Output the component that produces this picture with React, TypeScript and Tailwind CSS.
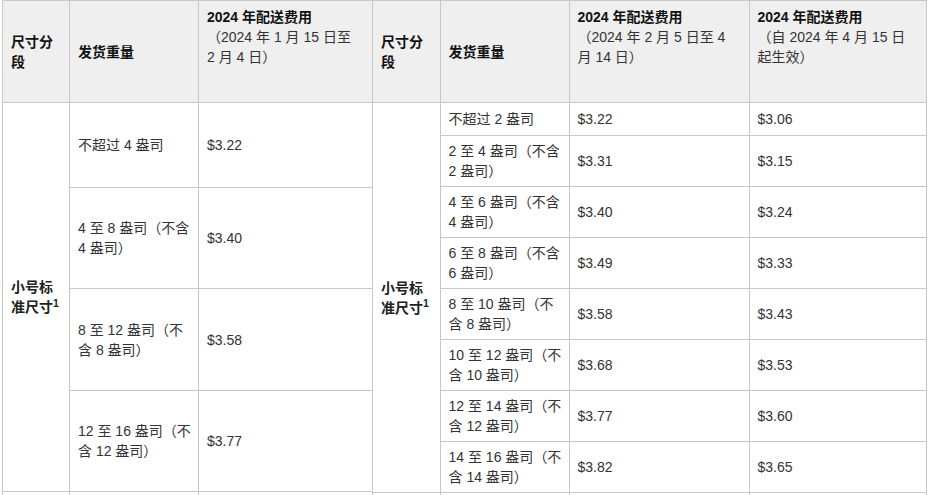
const leftRows = [
  { w: ["不超过 4 盎司"], p: "$3.22", h: "h-[85px]" },
  { w: ["4 至 8 盎司（不含", "4 盎司）"], p: "$3.40", h: "h-[101px]" },
  { w: ["8 至 12 盎司（不", "含 8 盎司）"], p: "$3.58", h: "h-[102px]" },
  { w: ["12 至 16 盎司（不", "含 12 盎司）"], p: "$3.77", h: "h-[101px]" },
];

const rightRows = [
  { w: ["不超过 2 盎司"], a: "$3.22", b: "$3.06", h: "h-[33px]" },
  { w: ["2 至 4 盎司（不含", "2 盎司）"], a: "$3.31", b: "$3.15", h: "h-[51px]" },
  { w: ["4 至 6 盎司（不含", "4 盎司）"], a: "$3.40", b: "$3.24", h: "h-[51px]" },
  { w: ["6 至 8 盎司（不含", "6 盎司）"], a: "$3.49", b: "$3.33", h: "h-[51px]" },
  { w: ["8 至 10 盎司（不", "含 8 盎司）"], a: "$3.58", b: "$3.43", h: "h-[51px]" },
  { w: ["10 至 12 盎司（不", "含 10 盎司）"], a: "$3.68", b: "$3.53", h: "h-[51px]" },
  { w: ["12 至 14 盎司（不", "含 12 盎司）"], a: "$3.77", b: "$3.60", h: "h-[51px]" },
  { w: ["14 至 16 盎司（不", "含 14 盎司）"], a: "$3.82", b: "$3.65", h: "h-[51px]" },
];

const cell = "border border-[#c8c8c8] px-2 align-middle whitespace-nowrap";
const head = "border border-[#c8c8c8] px-2 bg-[#efefef] whitespace-nowrap";

function Lines({ lines }: { lines: string[] }) {
  return (
    <>
      {lines.map((l, i) => (
        <span key={i} className="block">
          {l}
        </span>
      ))}
    </>
  );
}

// fee column header: bold title, then the date range in normal weight
function FeeHead({ lines }: { lines: string[] }) {
  return (
    <th className={`${head} align-top pt-[6px] text-left font-normal`}>
      <span className="block font-bold text-[#111]">2024 年配送费用</span>
      <Lines lines={lines} />
    </th>
  );
}

function SizeCell({ span, extraLeft }: { span: number; extraLeft?: boolean }) {
  return (
    <td rowSpan={span} className={`${cell} font-bold text-[#222] ${extraLeft ? "border-l-0" : ""}`}>
      小号标
      <br />
      准尺寸<sup>1</sup>
    </td>
  );
}

export default function App() {
  return (
    <div className="h-[495px] w-[928px] overflow-hidden bg-white font-['Liberation_Sans','Noto_Sans_CJK_SC',sans-serif] text-[14px] leading-5 text-[#333]">
      <div className="ml-[2px] flex items-start">
        <table className="w-[370px] table-fixed border-collapse">
          <colgroup>
            <col className="w-[67px]" />
            <col className="w-[129px]" />
            <col className="w-[174px]" />
          </colgroup>
          <thead>
            <tr className="h-[102px]">
              <th className={`${head} text-left align-middle font-bold text-[#111]`}>
                尺寸分
                <br />
                段
              </th>
              <th className={`${head} text-left align-middle font-bold text-[#111]`}>发货重量</th>
              <FeeHead lines={["（2024 年 1 月 15 日至", "2 月 4 日）"]} />
            </tr>
          </thead>
          <tbody>
            {leftRows.map((r, i) => (
              <tr key={i} className={r.h}>
                {i === 0 && <SizeCell span={4} />}
                <td className={cell}>
                  <Lines lines={r.w} />
                </td>
                <td className={cell}>{r.p}</td>
              </tr>
            ))}
            <tr className="h-[40px]">
              <td className={cell}></td>
              <td className={cell}></td>
              <td className={cell}></td>
            </tr>
          </tbody>
        </table>

        <table className="w-[553px] table-fixed border-collapse">
          <colgroup>
            <col className="w-[67px]" />
            <col className="w-[129px]" />
            <col className="w-[180px]" />
            <col className="w-[177px]" />
          </colgroup>
          <thead>
            <tr className="h-[102px]">
              <th className={`${head} border-l-0 text-left align-middle font-bold text-[#111]`}>
                尺寸分
                <br />
                段
              </th>
              <th className={`${head} text-left align-middle font-bold text-[#111]`}>发货重量</th>
              <FeeHead lines={["（2024 年 2 月 5 日至 4", "月 14 日）"]} />
              <FeeHead lines={["（自 2024 年 4 月 15 日", "起生效）"]} />
            </tr>
          </thead>
          <tbody>
            {rightRows.map((r, i) => (
              <tr key={i} className={r.h}>
                {i === 0 && <SizeCell span={8} extraLeft />}
                <td className={cell}>
                  <Lines lines={r.w} />
                </td>
                <td className={cell}>{r.a}</td>
                <td className={cell}>{r.b}</td>
              </tr>
            ))}
            <tr className="h-[40px]">
              <td className={`${cell} border-l-0`}></td>
              <td className={cell}></td>
              <td className={cell}></td>
              <td className={cell}></td>
            </tr>
          </tbody>
        </table>
      </div>
    </div>
  );
}
